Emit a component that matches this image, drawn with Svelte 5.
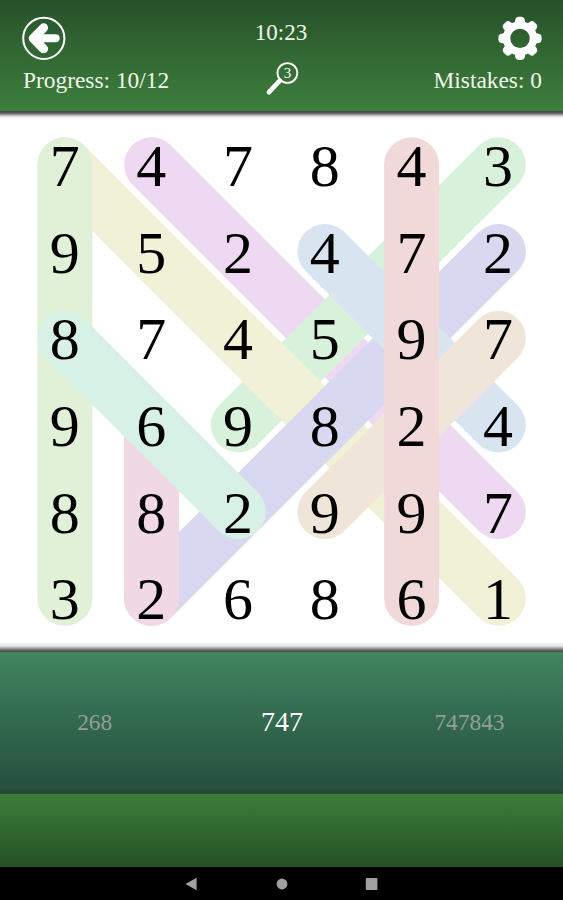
<script>
  const PITCH = 86.7;

  const rows = ['747843', '952472', '874597', '969824', '882997', '326861'];

  // from / to are [column, row], listed bottom layer first
  const found = [
    { from: [1, 0], to: [5, 4], color: '#efd8f1' },
    { from: [5, 0], to: [2, 3], color: '#d8f1da' },
    { from: [0, 0], to: [5, 5], color: '#f1f1d8' },
    { from: [5, 1], to: [1, 5], color: '#d8d8f0' },
    { from: [3, 1], to: [5, 3], color: '#d8e5f1' },
    { from: [5, 2], to: [3, 4], color: '#f0e5d9' },
    { from: [0, 0], to: [0, 5], color: '#e1f1d8' },
    { from: [1, 3], to: [1, 5], color: '#f0d8e5' },
    { from: [0, 2], to: [2, 4], color: '#d8f1e6' },
    { from: [4, 0], to: [4, 5], color: '#f1d9d9' }
  ];

  const teeth = [0, 45, 90, 135, 180, 225, 270, 315];

  let targets = ['268', '747', '747843'];
  let current = 1;
  let progress = 10;
  let mistakes = 0;
  let hints = 3;
  let time = '10:23';

  function center(index) {
    return (index + 0.5) * PITCH + 0.5;
  }
</script>

<div class="game">
  <header>
    <div class="side">
      <button aria-label="Back">
        <svg width="44" height="44" viewBox="0 0 44 44">
          <circle cx="21.8" cy="22.3" r="20.6" fill="none" stroke="#fff" stroke-width="2" />
          <path d="M12 22.3H33.6" stroke="#fff" stroke-width="8" stroke-linecap="round" />
          <path d="M21.6 11.8L11.2 22.3L21.6 32.8" fill="#fff" stroke="#fff" stroke-width="9" stroke-linecap="round" stroke-linejoin="round" />
        </svg>
      </button>
      <span>Progress: {progress}/12</span>
    </div>
    <div class="middle">
      <span class="time">{time}</span>
      <button class="hint" aria-label="Hint">
        <svg width="36" height="36" viewBox="0 0 36 36">
          <circle cx="23.4" cy="12" r="9.9" fill="none" stroke="#fff" stroke-width="1.8" />
          <path d="M15.8 19.7L5 31.2" stroke="#fff" stroke-width="4.8" stroke-linecap="round" />
          <text x="23.4" y="16.9" text-anchor="middle" font-size="15" fill="#fff">{hints}</text>
        </svg>
      </button>
    </div>
    <div class="side right">
      <button aria-label="Settings">
        <svg width="44" height="44" viewBox="-22 -22.4 44 44">
          <circle r="13.4" fill="none" stroke="#fff" stroke-width="7.4" />
          {#each teeth as angle}
            <path d="M-5.4 -15L-4.7 -18.8Q-4 -21.6 -1.6 -21.6H1.6Q4 -21.6 4.7 -18.8L5.4 -15Z" fill="#fff" transform="rotate({angle})" />
          {/each}
        </svg>
      </button>
      <span>Mistakes: {mistakes}</span>
    </div>
  </header>

  <main>
    <div class="board">
      <svg class="marks" viewBox="0 0 520.2 520.2">
        {#each found as mark}
          <line
            x1={center(mark.from[0])}
            y1={center(mark.from[1])}
            x2={center(mark.to[0])}
            y2={center(mark.to[1])}
            stroke={mark.color}
            stroke-width="55"
            stroke-linecap="round"
          />
        {/each}
      </svg>
      {#each rows as row}
        {#each row.split('') as digit}
          <span class="cell">{digit}</span>
        {/each}
      {/each}
    </div>
  </main>

  <section class="targets">
    {#each targets as target, i}
      <span class:current={i === current}>{target}</span>
    {/each}
  </section>

  <footer></footer>

  <nav>
    <svg width="14" height="14" viewBox="0 0 14 14"><path d="M.4 7L11.6 .8V13.2Z" fill="#a0a0a0" /></svg>
    <svg width="14" height="14" viewBox="0 0 14 14"><circle cx="7" cy="7" r="5.4" fill="#a0a0a0" /></svg>
    <svg width="14" height="14" viewBox="0 0 14 14"><rect x=".8" y="1" width="11.6" height="12" rx="1" fill="#a0a0a0" /></svg>
  </nav>
</div>

<style>
  :global(body) {
    margin: 0;
    background: #000;
  }

  .game {
    display: flex;
    flex-direction: column;
    width: 563px;
    height: 900px;
    overflow: hidden;
    font-family: 'Liberation Serif', 'Times New Roman', serif;
    color: #fff;
  }

  button {
    display: block;
    padding: 0;
    border: none;
    background: none;
    font-family: inherit;
    cursor: pointer;
  }

  svg {
    display: block;
  }

  header {
    box-sizing: border-box;
    display: grid;
    grid-template-columns: 1fr 100px 1fr;
    height: 111px;
    padding: 16px 21px 0 22px;
    font-size: 23.4px;
    line-height: 28px;
    color: #f2f8ec;
    background: linear-gradient(#27512a, #3e7f3d);
  }

  .side {
    display: flex;
    flex-direction: column;
    gap: 6px;
  }

  .side span {
    padding-left: 1px;
    white-space: nowrap;
  }

  .right {
    align-items: flex-end;
  }

  .middle {
    display: flex;
    flex-direction: column;
    align-items: center;
    padding-top: 3px;
  }

  .time {
    margin-left: -2px;
    font-size: 23px;
  }

  .hint {
    margin-top: 14px;
  }

  main {
    box-sizing: border-box;
    height: 541px;
    padding: 10px 21.5px 0 21.3px;
    background:
      linear-gradient(#454545, #555 2px, #aaa 4px, #eee 6px, transparent 8px) top / 100% 8px no-repeat,
      linear-gradient(transparent, #e4e4e4 4px, #aaa 6px, #666 8px, #484848 10px) bottom / 100% 10px no-repeat,
      #fff;
  }

  .board {
    position: relative;
    display: grid;
    grid-template-columns: repeat(6, 86.7px);
    grid-template-rows: repeat(6, 86.7px);
    width: 520.2px;
    height: 520.2px;
  }

  .marks {
    position: absolute;
    inset: 0;
  }

  .cell {
    position: relative;
    display: flex;
    align-items: center;
    justify-content: center;
    padding-top: 3px;
    font-size: 60px;
    line-height: 60px;
    color: #000;
  }

  .targets {
    box-sizing: border-box;
    display: grid;
    grid-template-columns: repeat(3, 187.4px);
    align-items: center;
    justify-items: center;
    height: 142px;
    padding: 0 0 2px 1px;
    font-size: 23.4px;
    color: #949f99;
    background: linear-gradient(#41855f, #336b50 45%, #264f3e 97%, #24482a);
  }

  .targets .current {
    font-size: 28px;
    color: #fff;
  }

  footer {
    height: 73px;
    background: linear-gradient(#3d7e3b, #265026);
  }

  nav {
    display: flex;
    align-items: center;
    justify-content: center;
    gap: 76px;
    height: 33px;
    background: #000;
  }
</style>
